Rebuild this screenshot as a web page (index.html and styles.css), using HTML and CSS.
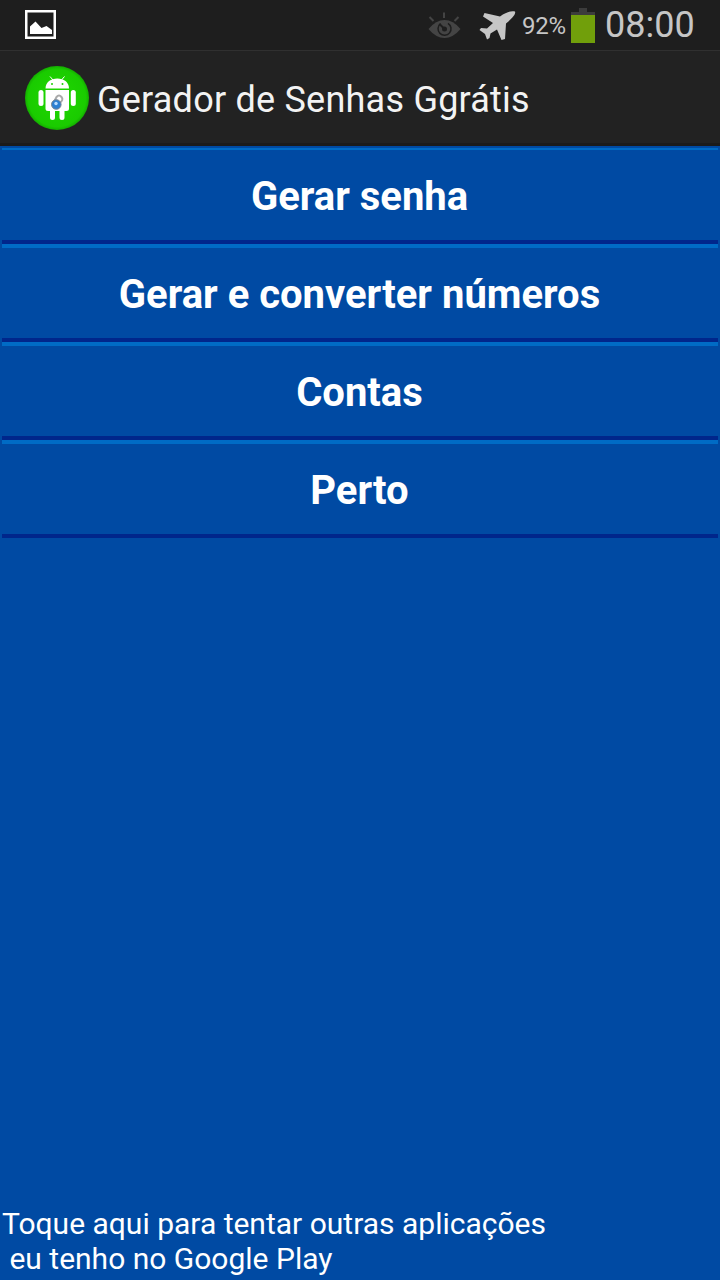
FILE: index.html
```html
<!DOCTYPE html>
<html lang="pt">

<head>
    <meta charset="UTF-8">
    <title>Gerador de Senhas Ggrátis</title>
    <link rel="stylesheet" href="styles.css">
</head>

<body>
    <div class="status-bar">
        <svg class="picture-icon" width="31" height="29" viewBox="0 0 31 29">
            <rect x="1.25" y="1.25" width="28.5" height="26.5" fill="none" stroke="#fff" stroke-width="2.5" />
            <path d="M5 24V16.500L10.500 11.500L16.500 18L21.500 16L27 20V24Z" fill="#fff" />
        </svg>
        <div class="status-right">
            <svg class="eye-icon" width="33" height="27" viewBox="0 0 33 27">
                <path d="M16 0.500V6M1.500 5L5.500 9M30.500 5L26.500 9" fill="none" stroke="#444" stroke-width="2" />
                <path d="M0.500 17Q8 8 16.500 8T32.500 17Q25 26 16.500 26T0.500 17Z" fill="#444" />
                <path d="M12.500 11.700A6.500 6.500 0 1 0 20 11.300" fill="none" stroke="#1e1e1e" stroke-width="1.500" />
                <path d="M11.500 12L16.500 17" stroke="#1e1e1e" stroke-width="2" />
                <circle cx="16.500" cy="17" r="2.500" fill="#1e1e1e" />
            </svg>
            <svg class="plane-icon" width="37" height="30" viewBox="0 0 37 30">
                <path d="M36 0.500C37 3 34 6.500 27 12.500L26 28L22.500 29L18 18.500L11.500 22.500L10.500 27L8 28.500L6 23L0.500 19L2 17L8 17.500L14 12L4 5.500L5.500 2L21 5.500C28 0.500 33-0.500 36 0.500Z" fill="#c6c6c6" />
            </svg>
            <span class="battery-level">92%</span>
            <svg class="battery-icon" width="24" height="35" viewBox="0 0 24 35">
                <path d="M8 0H16V4H24V7H0V4H8Z" fill="#3c3c3c" />
                <rect y="7" width="24" height="28" fill="#719f0b" />
            </svg>
            <span class="clock">08:00</span>
        </div>
    </div>

    <header class="action-bar">
        <svg class="app-icon" width="64" height="64" viewBox="0 0 64 64">
            <defs>
                <radialGradient id="green" cx="50%" cy="50%" r="50%">
                    <stop offset="0" stop-color="#1fd800" />
                    <stop offset="0.900" stop-color="#1acb00" />
                    <stop offset="1" stop-color="#14ad00" />
                </radialGradient>
            </defs>
            <circle cx="32" cy="32" r="32" fill="url(#green)" />
            <g fill="#fff">
                <path d="M20.500 22.500C20.500 16 26 12.500 32.300 12.500S44 16 44 22.500Z" />
                <path d="M20.500 24H44V42.500Q44 45 41.500 45H39.500V51.500Q39.500 54 37 54T34.500 51.500V45H30V51.500Q30 54 27.500 54T25 51.500V45H23Q20.500 45 20.500 42.500Z" />
                <rect x="13.500" y="24" width="5" height="16" rx="2.500" />
                <rect x="45.800" y="24" width="5" height="16" rx="2.500" />
            </g>
            <path d="M28 14L25 10.500M36.500 14L39.500 10.500" stroke="#fff" stroke-width="1" />
            <circle cx="27" cy="18" r="1" fill="#1bd000" />
            <circle cx="37.500" cy="18" r="1" fill="#1bd000" />
            <path d="M29.500 35L31.500 31Q34 28 36.500 31T34.500 37" fill="none" stroke="#aaa" stroke-width="2" />
            <circle cx="31.300" cy="38.500" r="4.800" fill="#2d7fd2" stroke="#7c8791" stroke-width="1" />
            <circle cx="31" cy="37.500" r="1.700" fill="#b8dcff" />
        </svg>
        <h1>Gerador de Senhas Ggrátis</h1>
    </header>

    <main>
        <ul class="menu">
            <li>Gerar senha</li>
            <li>Gerar e converter números</li>
            <li>Contas</li>
            <li>Perto</li>
        </ul>
        <p class="more-apps">Toque aqui para tentar outras aplicações<br>&nbsp;eu tenho no Google Play</p>
    </main>
</body>

</html>
```
FILE: styles.css
```css
body {
    font-family: Roboto, sans-serif;
    background: #004aa3;
    margin: 0;
    height: 1280px;
    display: flex;
    flex-direction: column;
    overflow: hidden;
}

svg {
    display: block;
    flex: none;
}

.status-bar {
    box-sizing: border-box;
    height: 51px;
    display: flex;
    justify-content: space-between;
    align-items: flex-start;
    background: #1e1e1e;
    border-bottom: 1px solid #303030;
    padding: 0 26px 0 25px;
    color: #c6c6c6;
}

.picture-icon {
    margin-top: 10px;
}

.status-right {
    display: flex;
    align-items: flex-start;
}

.eye-icon {
    margin: 12px 18px 0 0;
}

.plane-icon {
    margin: 11px 6px 0 0;
}

.battery-level {
    width: 49px;
    font-size: 24px;
    letter-spacing: -0.3px;
    line-height: 28px;
    margin-top: 12px;
}

.battery-icon {
    margin: 8px 10px 0 0;
}

.clock {
    width: 89px;
    font-size: 36px;
    line-height: 42px;
    margin-top: 4px;
}

.action-bar {
    box-sizing: border-box;
    height: 95px;
    display: flex;
    align-items: flex-start;
    background: #222;
    border-bottom: 3px solid #1b1b1b;
    padding: 15px 25px 0;
}

.action-bar h1 {
    margin: 13px 0 0 8px;
    font-size: 36px;
    font-weight: normal;
    letter-spacing: 0.23px;
    line-height: 42px;
    color: #f3f3f3;
    white-space: nowrap;
}

main {
    flex: 1;
    display: flex;
    flex-direction: column;
    justify-content: space-between;
}

.menu {
    list-style: none;
    margin: 0;
    padding: 2px 2px 0;
}

.menu li {
    box-sizing: border-box;
    height: 98px;
    border-top: 4px solid #006bc5;
    border-bottom: 4px solid #00268b;
    font-size: 40px;
    font-weight: bold;
    line-height: 94px;
    text-align: center;
    text-indent: -1px;
    color: #fff;
}

.menu li:first-child {
    height: 96px;
    border-top-width: 2px;
}

.more-apps {
    margin: 0 0 4px 2px;
    font-size: 30px;
    line-height: 35px;
    color: #fff;
    white-space: nowrap;
}
```
